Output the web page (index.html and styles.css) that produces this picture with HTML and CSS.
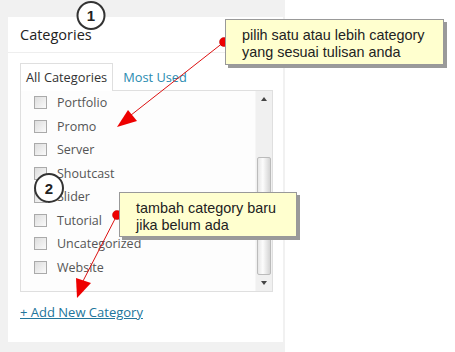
FILE: index.html
```html
<!DOCTYPE html>
<html lang="en">

<head>
  <meta charset="UTF-8">
  <title>Categories</title>
  <link rel="stylesheet" href="styles.css">
</head>

<body>
  <div class="wrap">
    <div class="panel">
      <h3 class="panel-head">Categories</h3>

      <div class="panel-body">
        <ul class="tabs">
          <li class="tab active">All Categories</li>
          <li class="tab"><a href="#">Most Used</a></li>
        </ul>

        <div class="cat-box">
          <ul class="cat-list">
            <li><span class="check"></span>Portfolio</li>
            <li><span class="check"></span>Promo</li>
            <li><span class="check"></span>Server</li>
            <li><span class="check"></span>Shoutcast</li>
            <li><span class="check"></span>Slider</li>
            <li><span class="check"></span>Tutorial</li>
            <li><span class="check"></span>Uncategorized</li>
            <li><span class="check"></span>Website</li>
          </ul>
          <div class="scrollbar">
            <span class="arrow up"></span>
            <div class="track">
              <div class="thumb"></div>
            </div>
            <span class="arrow down"></span>
          </div>
        </div>

        <a class="add-new" href="#">+ Add New Category</a>
      </div>
    </div>
  </div>

  <!-- annotations drawn over the screenshot -->
  <svg class="marks" width="455" height="352" viewBox="0 0 455 352">
    <line x1="224" y1="42" x2="126" y2="119" stroke="#d11" stroke-width="1" />
    <polygon points="117,127 128,110 137,121" fill="#ee0000" />
    <line x1="117" y1="215" x2="82" y2="283" stroke="#d11" stroke-width="1" />
    <polygon points="77,298 76,278 91,283" fill="#ee0000" />

    <circle cx="224" cy="42" r="4.5" fill="#ee0000" stroke="#b00" stroke-width="0.5" />
    <circle cx="117" cy="215" r="4.5" fill="#ee0000" stroke="#b00" stroke-width="0.5" />

    <circle cx="91" cy="15.5" r="13.5" fill="#fff" stroke="#333" stroke-width="2" />
    <text x="91" y="21" class="num">1</text>
    <circle cx="49" cy="188" r="14" fill="#fff" stroke="#333" stroke-width="2" />
    <text x="49" y="193.5" class="num">2</text>
  </svg>

  <div class="note note-one">pilih satu atau lebih category<br>yang sesuai tulisan anda</div>
  <div class="note note-two">tambah category baru<br>jika belum ada</div>
</body>

</html>
```

FILE: styles.css
```css
body {
  margin: 0;
  background-color: #fff;
  font-family: 'Open Sans', 'Noto Sans', sans-serif;
  color: #555;
}

.wrap {
  width: 275px;
  padding: 17px 2px 10px 8px;
  background-color: #f1f1f1;
}

.panel {
  height: 325px;
  background-color: #fff;
}

.panel-head {
  margin: 0;
  padding: 8px 12px;
  font-size: 14.5px;
  line-height: 19px;
  font-weight: 400;
  color: #222;
  border-bottom: 1px solid #eee;
}

.panel-body {
  padding: 10px 10px 0 12px;
}

.tabs {
  display: flex;
  list-style: none;
  margin: 0;
  padding: 0;
}

.tab {
  padding: 0 5px;
  font-size: 12.8px;
  line-height: 26px;
  border: 1px solid transparent;
  border-bottom: none;
}

.tab.active {
  border-color: #dfdfdf;
  background-color: #fff;
  color: #333;
  margin-bottom: -1px;
  position: relative;
}

.tab a {
  margin-left: 4px;
  color: #2a8bb0;
  text-decoration: none;
}

.cat-box {
  display: flex;
  height: 200px;
  border: 1px solid #dfdfdf;
  background-color: #fdfdfd;
}

.cat-list {
  flex: 1;
  list-style: none;
  margin: 0;
  padding: 0 0 0 13px;
}

.cat-list li {
  display: flex;
  align-items: center;
  height: 23.5px;
  font-size: 12.5px;
  color: #555;
}

.check {
  width: 11px;
  height: 11px;
  margin-right: 10px;
  border: 1px solid #aaa;
  background: linear-gradient(135deg, #ddd, #fafafa);
}

.scrollbar {
  display: flex;
  flex-direction: column;
  width: 16px;
  background-color: #f0f0f0;
  border-left: 1px solid #f6f6f6;
}

.arrow {
  height: 16px;
  display: flex;
  justify-content: center;
  align-items: center;
}

.arrow::before {
  content: '';
  border-left: 3.5px solid transparent;
  border-right: 3.5px solid transparent;
}

.arrow.up::before {
  border-bottom: 4px solid #444;
}

.arrow.down::before {
  border-top: 4px solid #444;
}

.track {
  flex: 1;
  display: flex;
  flex-direction: column;
  justify-content: flex-end;
}

.thumb {
  height: 116px;
  margin: 0 1px;
  border: 1px solid #bbb;
  border-radius: 2px;
  background: linear-gradient(90deg, #e6e6e6, #fcfcfc 40%, #d4d4d4);
}

.add-new {
  display: inline-block;
  margin-top: 11px;
  font-size: 13px;
  color: #21759b;
  text-decoration: underline;
}

.marks {
  position: absolute;
  top: 0;
  left: 0;
  pointer-events: none;
}

.num {
  font-family: 'Liberation Sans', Arial, sans-serif;
  font-size: 15px;
  font-weight: 700;
  fill: #222;
  text-anchor: middle;
}

.note {
  position: absolute;
  padding: 7px 0 0 16px;
  box-sizing: border-box;
  background-color: #ffffcf;
  border: 1px solid #999;
  box-shadow: 3px 3px 0 #9a9a9a;
  font-family: 'Liberation Sans', Arial, sans-serif;
  font-size: 14.4px;
  line-height: 17px;
  color: #222;
}

.note-one {
  left: 225px;
  top: 19px;
  width: 219px;
  height: 46px;
}

.note-two {
  left: 119px;
  top: 192px;
  width: 178px;
  height: 45px;
}
```
